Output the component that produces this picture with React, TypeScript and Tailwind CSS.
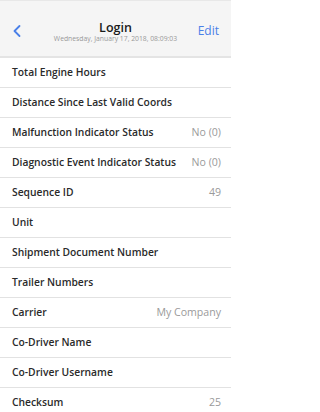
import { ChevronLeft } from "lucide-react";

const rows: { label: string; value?: string }[] = [
  { label: "Total Engine Hours" },
  { label: "Distance Since Last Valid Coords" },
  { label: "Malfunction Indicator Status", value: "No (0)" },
  { label: "Diagnostic Event Indicator Status", value: "No (0)" },
  { label: "Sequence ID", value: "49" },
  { label: "Unit" },
  { label: "Shipment Document Number" },
  { label: "Trailer Numbers" },
  { label: "Carrier", value: "My Company" },
  { label: "Co-Driver Name" },
  { label: "Co-Driver Username" },
  { label: "Checksum", value: "25" },
];

export default function App() {
  return (
    <div className="w-[231px] h-[412px] overflow-hidden bg-white font-['Open_Sans',sans-serif]">
      {/* Header */}
      <div className="h-[58px] bg-[#f5f5f5] border-t border-[#e8e8e8] border-b-2 border-b-[#e4e4e4] flex items-center px-2 pt-[5px]">
        <div className="w-10 flex items-center">
          <ChevronLeft className="w-5 h-5 text-[#4a80e8] -ml-[1px]" strokeWidth={2.2} />
        </div>
        <div className="flex-1 flex flex-col items-center leading-none mt-[3px]">
          <span className="text-[12.5px] font-semibold text-[#1a1a1a]">Login</span>
          <span className="text-[6.8px] text-[#999] mt-[2px]">Wednesday, January 17, 2018, 08:09:03</span>
        </div>
        <div className="w-10 flex justify-end pr-[4px]">
          <span className="text-[12px] font-medium text-[#4a80e8]">Edit</span>
        </div>
      </div>

      {/* Rows */}
      <div>
        {rows.map((r) => (
          <div
            key={r.label}
            className="h-[30px] flex items-center justify-between pl-3 pr-[10px] border-b border-[#e2e2e2]"
          >
            <span className="text-[10.3px] font-semibold text-[#2a2a2a]">{r.label}</span>
            {r.value && <span className="text-[10.6px] text-[#9a9a9a]">{r.value}</span>}
          </div>
        ))}
      </div>
    </div>
  );
}
